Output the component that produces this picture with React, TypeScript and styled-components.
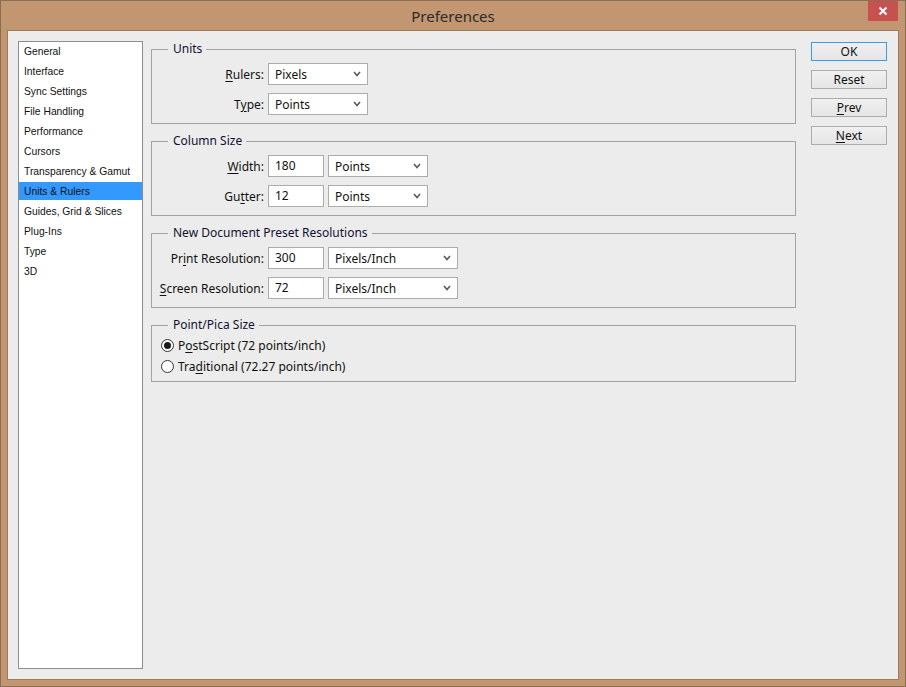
import React from 'react';
import styled, { createGlobalStyle } from 'styled-components';

const GlobalStyle = createGlobalStyle`
  html, body {
    margin: 0;
    padding: 0;
    background: #c19670;
  }
  * {
    box-sizing: border-box;
  }
`;

const navItems = [
  'General',
  'Interface',
  'Sync Settings',
  'File Handling',
  'Performance',
  'Cursors',
  'Transparency & Gamut',
  'Units & Rulers',
  'Guides, Grid & Slices',
  'Plug-Ins',
  'Type',
  '3D',
];

const Chevron = () => (
  <svg width="8" height="6" viewBox="0 0 8 6">
    <polyline
      points="1,1 4,4.5 7,1"
      fill="none"
      stroke="#5a5a5a"
      strokeWidth="1.6"
    />
  </svg>
);

const Select = ({ value, width }: { value: string; width: number }) => (
  <SelectBox $width={width}>
    <span>{value}</span>
    <Chevron />
  </SelectBox>
);

const App = () => {
  return (
    <>
      <GlobalStyle />
      <Window>
        <TitleBar>
          <span />
          <Title>Preferences</Title>
          <CloseButton>
            <svg width="10" height="10" viewBox="0 0 10 10">
              <path d="M1.5 1.5 L8.5 8.5 M8.5 1.5 L1.5 8.5" stroke="#fff" strokeWidth="2" />
            </svg>
          </CloseButton>
        </TitleBar>

        <Client>
          <Sidebar>
            {navItems.map((item) => (
              <NavItem key={item} $active={item === 'Units & Rulers'}>
                {item}
              </NavItem>
            ))}
          </Sidebar>

          <Main>
            <Group>
              <Legend>Units</Legend>
              <FormGrid>
                <Label>
                  <u>R</u>ulers:
                </Label>
                <Controls>
                  <Select value="Pixels" width={100} />
                </Controls>
                <Label>
                  T<u>y</u>pe:
                </Label>
                <Controls>
                  <Select value="Points" width={100} />
                </Controls>
              </FormGrid>
            </Group>

            <Group>
              <Legend>Column Size</Legend>
              <FormGrid>
                <Label>
                  <u>W</u>idth:
                </Label>
                <Controls>
                  <Input>180</Input>
                  <Select value="Points" width={100} />
                </Controls>
                <Label>
                  Gu<u>t</u>ter:
                </Label>
                <Controls>
                  <Input>12</Input>
                  <Select value="Points" width={100} />
                </Controls>
              </FormGrid>
            </Group>

            <Group>
              <Legend>New Document Preset Resolutions</Legend>
              <FormGrid>
                <Label>
                  Pr<u>i</u>nt Resolution:
                </Label>
                <Controls>
                  <Input>300</Input>
                  <Select value="Pixels/Inch" width={130} />
                </Controls>
                <Label>
                  <u>S</u>creen Resolution:
                </Label>
                <Controls>
                  <Input>72</Input>
                  <Select value="Pixels/Inch" width={130} />
                </Controls>
              </FormGrid>
            </Group>

            <Group $compact>
              <Legend>Point/Pica Size</Legend>
              <RadioList>
                <RadioRow>
                  <Radio $checked />
                  <span>
                    P<u>o</u>stScript (72 points/inch)
                  </span>
                </RadioRow>
                <RadioRow>
                  <Radio />
                  <span>
                    Tra<u>d</u>itional (72.27 points/inch)
                  </span>
                </RadioRow>
              </RadioList>
            </Group>
          </Main>

          <Buttons>
            <Button $default>OK</Button>
            <Button>Reset</Button>
            <Button>
              <u>P</u>rev
            </Button>
            <Button>
              <u>N</u>ext
            </Button>
          </Buttons>
        </Client>
      </Window>
    </>
  );
};

export default App;

const Window = styled.div`
  width: 906px;
  height: 687px;
  border: 1px solid #8a6e53;
  background: #c19670;
  padding: 0 6px 6px 6px;
  display: flex;
  flex-direction: column;
  font-family: 'Noto Sans', 'Open Sans', sans-serif;
`;

const TitleBar = styled.div`
  height: 29px;
  display: grid;
  grid-template-columns: 1fr auto 1fr;
  align-items: start;
`;

const Title = styled.div`
  font-size: 15px;
  line-height: 29px;
  color: #2b2b2b;
  padding-top: 1px;
`;

const CloseButton = styled.div`
  justify-self: end;
  width: 30px;
  height: 20px;
  margin-right: 1px;
  background: #c75050;
  display: flex;
  align-items: center;
  justify-content: center;
`;

const Client = styled.div`
  flex: 1;
  border: 1px solid #9a7c60;
  background: #ececec;
  display: flex;
  padding: 9px 11px 10px 10px;
`;

const Sidebar = styled.div`
  width: 125px;
  margin-top: 1px;
  border: 1px solid #8e8e8e;
  background: #fff;
  display: flex;
  flex-direction: column;
  gap: 2px;
  font-family: 'Liberation Sans', Arial, sans-serif;
  font-size: 10.3px;
  color: #111;
`;

const NavItem = styled.div<{ $active?: boolean }>`
  height: 18px;
  line-height: 19px;
  padding-left: 5px;
  white-space: nowrap;
  background: ${(p) => (p.$active ? '#3399ff' : 'transparent')};
`;

const Main = styled.div`
  width: 645px;
  margin-left: 8px;
  margin-top: 1px;
  display: flex;
  flex-direction: column;
  gap: 9px;
`;

const Group = styled.fieldset<{ $compact?: boolean }>`
  margin: 0;
  padding: ${(p) => (p.$compact ? '2px 0 4px 0' : '6px 0 8px 0')};
  border: 1px solid #a3a3a3;
  min-width: 0;
`;

const Legend = styled.legend`
  margin-left: 16px;
  padding: 0 4px 0 5px;
  font-size: 12px;
  line-height: 16px;
  color: #111133;
`;

const FormGrid = styled.div`
  display: grid;
  grid-template-columns: 112px auto;
  column-gap: 4px;
  row-gap: 8px;
  justify-content: start;
`;

const Label = styled.div`
  justify-self: end;
  align-self: center;
  font-size: 12px;
  color: #111;
  white-space: nowrap;

  u {
    text-underline-offset: 2px;
  }
`;

const Controls = styled.div`
  display: flex;
  gap: 4px;
`;

const Input = styled.div`
  width: 56px;
  height: 22px;
  border: 1px solid #acacac;
  background: #fff;
  padding-left: 6px;
  font-size: 12px;
  line-height: 20px;
  color: #111;
`;

const SelectBox = styled.div<{ $width: number }>`
  width: ${(p) => p.$width}px;
  height: 22px;
  border: 1px solid #acacac;
  background: #fff;
  padding: 0 6px 0 6px;
  display: flex;
  align-items: center;
  justify-content: space-between;
  font-size: 12px;
  color: #111;
`;

const RadioList = styled.div`
  display: flex;
  flex-direction: column;
  padding-left: 9px;
`;

const RadioRow = styled.div`
  height: 21px;
  display: flex;
  align-items: center;
  gap: 4px;
  font-size: 12px;
  color: #111;

  u {
    text-underline-offset: 2px;
  }
`;

const Radio = styled.span<{ $checked?: boolean }>`
  width: 13px;
  height: 13px;
  border-radius: 50%;
  border: 1px solid #333;
  background: #fff;
  display: flex;
  align-items: center;
  justify-content: center;

  &::after {
    content: '';
    width: 7px;
    height: 7px;
    border-radius: 50%;
    background: ${(p) => (p.$checked ? '#1a1a1a' : 'transparent')};
  }
`;

const Buttons = styled.div`
  width: 76px;
  margin-left: 15px;
  margin-top: 2px;
  display: flex;
  flex-direction: column;
  gap: 9px;
`;

const Button = styled.div<{ $default?: boolean }>`
  height: 19px;
  border: 1px solid ${(p) => (p.$default ? '#3c9be8' : '#acacac')};
  background: linear-gradient(#f0f0f0, #e5e5e5);
  font-size: 12px;
  line-height: 17px;
  text-align: center;
  color: #111;

  u {
    text-underline-offset: 2px;
  }
`;
